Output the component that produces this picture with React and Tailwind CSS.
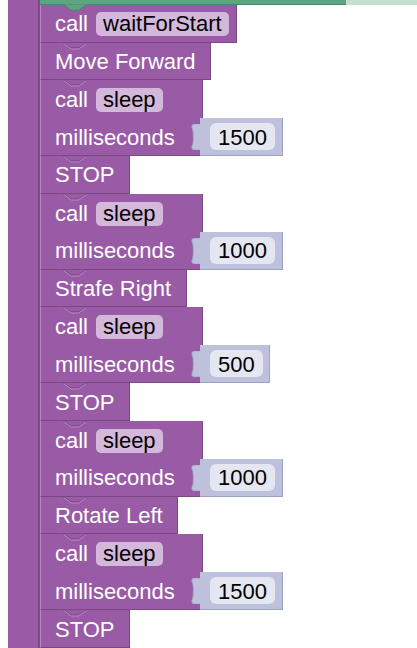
import React from 'react';

const PURPLE = 'bg-[#995ba5]';

const Notch = ({ green }) => (
  <svg className="absolute left-[22px] top-[-1px]" width="24" height="8" viewBox="0 0 24 8">
    {green ? (
      <path d="M0 0 L8 6 H16 L24 0 Z" fill="#5ba580" stroke="#4a8a69" strokeWidth="1" />
    ) : (
      <>
        <path d="M0 0.5 L8 6 H16 L24 0.5" fill="none" stroke="#74417f" strokeWidth="1" />
        <path d="M1 1.8 L8.3 7 H15.7 L23 1.8" fill="none" stroke="#b68fc0" strokeWidth="1" />
      </>
    )}
  </svg>
);

const Pill = ({ children }) => (
  <span className="ml-[8px] flex h-[24px] items-center rounded-[5px] bg-[#d4b8db] px-[7px] text-black">
    {children}
  </span>
);

const Row = ({ width, children, notch, green }) => (
  <div
    className={`relative flex h-[38px] items-center border-l border-l-[#b48cbd] border-r border-r-[#7a4984] border-b border-b-[#7a4984] ${PURPLE} pl-[14px] pt-[2px] text-white`}
    style={{ width }}
  >
    {notch && <Notch green={green} />}
    {children}
  </div>
);

const Simple = ({ label, width }) => (
  <Row width={width} notch>
    <span>{label}</span>
  </Row>
);

const Sleep = ({ ms, valueWidth }) => (
  <div className="flex flex-col">
    <div
      className={`relative flex h-[38px] w-[163px] items-center border-l border-l-[#b48cbd] border-r border-r-[#7a4984] ${PURPLE} pl-[14px] pt-[2px] text-white`}
    >
      <Notch />
      <span>call</span>
      <Pill>sleep</Pill>
    </div>
    <div className="flex">
      <div
        className={`flex h-[38px] w-[160px] items-center border-l border-l-[#b48cbd] border-b border-b-[#7a4984] ${PURPLE} pl-[14px] pt-[2px] text-white`}
      >
        milliseconds
      </div>
      <div
        className="relative flex h-[38px] items-center border-r border-r-[#9da2c4] border-b border-b-[#9da2c4] bg-[#bdc1dc] pl-[10px]"
        style={{ width: valueWidth }}
      >
        <svg className="absolute left-[-9px] top-[6px]" width="10" height="26" viewBox="0 0 10 26">
          <path
            d="M10 0 L4 0 C1 0 0 2 1.5 5 C2.5 8 2.5 18 1.5 21 C0 24 1 26 4 26 L10 26 Z"
            fill="#bdc1dc"
            stroke="#9da2c4"
            strokeWidth="0.8"
          />
          <rect x="9" y="0.5" width="1.5" height="25" fill="#bdc1dc" />
        </svg>
        <span className="flex h-[27px] items-center rounded-[6px] bg-[#e4e6f1] px-[8px] pt-[2px] text-black">
          {ms}
        </span>
      </div>
    </div>
  </div>
);

export default function App() {
  return (
    <div className="flex h-[648px] w-[417px] overflow-hidden bg-white font-['Liberation_Sans',Arial,sans-serif] text-[22px] leading-none">
      <div className="ml-[8px] h-full w-[32px] border-r-[2px] border-r-[#7f4a8a] bg-[#995ba5]" />
      <div className="flex flex-1 flex-col">
        <div className="flex h-[5px]">
          <div className="w-[306px] border-b border-b-[#4a8a69] bg-[#5ba580]" />
          <div className="flex-1 bg-[#c3e0d1]" />
        </div>
        <Row width="197px" notch green>
          <span>call</span>
          <Pill>waitForStart</Pill>
        </Row>
        <Simple label="Move Forward" width="171px" />
        <Sleep ms="1500" valueWidth="83px" />
        <Simple label="STOP" width="90px" />
        <Sleep ms="1000" valueWidth="83px" />
        <Simple label="Strafe Right" width="147px" />
        <Sleep ms="500" valueWidth="70px" />
        <Simple label="STOP" width="90px" />
        <Sleep ms="1000" valueWidth="83px" />
        <Simple label="Rotate Left" width="138px" />
        <Sleep ms="1500" valueWidth="83px" />
        <Simple label="STOP" width="90px" />
      </div>
    </div>
  );
}
